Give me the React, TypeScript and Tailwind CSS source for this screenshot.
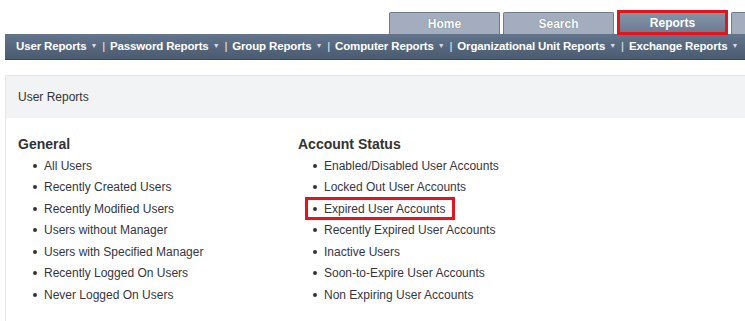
const navItems = [
  "User Reports",
  "Password Reports",
  "Group Reports",
  "Computer Reports",
  "Organizational Unit Reports",
  "Exchange Reports",
];

const general = [
  "All Users",
  "Recently Created Users",
  "Recently Modified Users",
  "Users without Manager",
  "Users with Specified Manager",
  "Recently Logged On Users",
  "Never Logged On Users",
];

const accountStatus = [
  "Enabled/Disabled User Accounts",
  "Locked Out User Accounts",
  "Expired User Accounts",
  "Recently Expired User Accounts",
  "Inactive Users",
  "Soon-to-Expire User Accounts",
  "Non Expiring User Accounts",
];

const ReportItem = ({ label, marked }: { label: string; marked?: boolean }) => (
  <li className="relative flex h-[21.5px] items-center pl-[15px]">
    {marked && (
      <span className="absolute left-[7px] top-[-1px] h-[23px] w-[150px] border-[3px] border-[#e3141d]" />
    )}
    <span className="mr-[7px] h-[4px] w-[4px] rounded-full bg-[#333]" />
    <span className="text-[12px] text-[#35353f]">{label}</span>
  </li>
);

const ReportGroup = ({ title, items, marked }: { title: string; items: string[]; marked?: string }) => (
  <div className="w-[280px]">
    <h3 className="h-[22px] text-[14px] font-bold leading-[22px] text-[#333]">{title}</h3>
    <ul>
      {items.map((item) => (
        <ReportItem key={item} label={item} marked={item === marked} />
      ))}
    </ul>
  </div>
);

export default function App() {
  return (
    <div className="h-[321px] w-[745px] overflow-hidden bg-white font-['Liberation_Sans',Arial,sans-serif]">
      {/* top tabs */}
      <div className="flex h-[34px] items-end gap-[3px] pl-[389px]">
        <div className="flex h-[22px] w-[111px] shrink-0 items-center justify-center rounded-t-[2px] border border-b-0 border-[#6e7b8d] bg-[#a3adbd] text-[12px] font-bold text-white [text-shadow:0_0_1px_#55647a]">
          Home
        </div>
        <div className="flex h-[22px] w-[111px] shrink-0 items-center justify-center rounded-t-[2px] border border-b-0 border-[#6e7b8d] bg-[#a3adbd] text-[12px] font-bold text-white [text-shadow:0_0_1px_#55647a]">
          Search
        </div>
        <div className="relative z-10 mb-[-1px] flex h-[25px] w-[111px] shrink-0 items-center justify-center border-[3px] border-[#e3141d] bg-gradient-to-b from-[#8593a7] to-[#6c7c92] text-[12px] font-bold text-white">
          Reports
        </div>
        <div className="h-[22px] w-[40px] shrink-0 rounded-t-[2px] border border-b-0 border-[#6e7b8d] bg-[#a3adbd]" />
      </div>

      {/* nav bar */}
      <div className="ml-[5px] flex h-[26px] items-center whitespace-nowrap border-b border-[#3a4655] bg-gradient-to-b from-[#62758c] to-[#4b5b70] pl-[11px] text-[11.5px] font-bold tracking-[-0.15px] text-white">
        {navItems.map((item, i) => (
          <div key={item} className="flex items-center">
            {i > 0 && <span className="mx-[5px] font-normal text-[#e8ecf2]">|</span>}
            <span>{item}</span>
            <span className="ml-[4px] text-[7px] text-[#d6dde6]">▼</span>
          </div>
        ))}
      </div>

      {/* panel */}
      <div className="ml-[5px] mt-[15px] h-[250px] border-l border-t border-[#e4e6ea]">
        <div className="flex h-[42px] items-center bg-[#f2f3f5] pl-[12px] text-[12px] text-[#333]">
          User Reports
        </div>
        <div className="flex pl-[12px] pt-[15px]">
          <ReportGroup title="General" items={general} />
          <ReportGroup title="Account Status" items={accountStatus} marked="Expired User Accounts" />
        </div>
      </div>
    </div>
  );
}
